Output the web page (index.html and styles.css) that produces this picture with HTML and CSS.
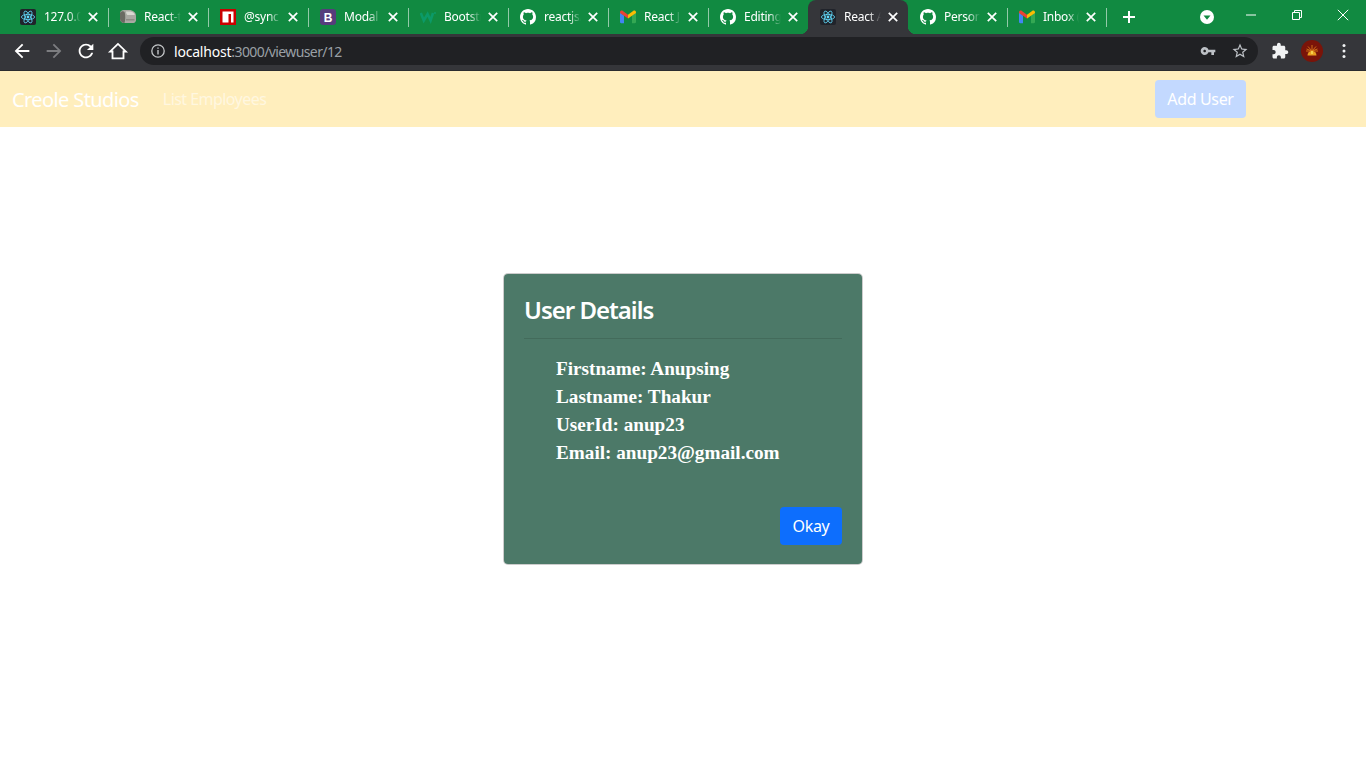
FILE: index.html
```html
<!DOCTYPE html>
<html lang="en">
<head>
<meta charset="utf-8">
<title>React App</title>
<link rel="stylesheet" href="styles.css">
</head>
<body>
<svg class="sprite" aria-hidden="true">
  <symbol id="react" viewBox="0 0 16 16">
    <rect width="16" height="16" rx="2" fill="#20232a"/>
    <g fill="none" stroke="#61dafb" stroke-width=".8">
      <ellipse cx="8" cy="8" rx="6.6" ry="2.6"/>
      <ellipse cx="8" cy="8" rx="6.6" ry="2.6" transform="rotate(60 8 8)"/>
      <ellipse cx="8" cy="8" rx="6.6" ry="2.6" transform="rotate(120 8 8)"/>
    </g>
    <circle cx="8" cy="8" r="1.4" fill="#61dafb"/>
  </symbol>
  <symbol id="github" viewBox="0 0 16 16">
    <path fill="#fff" d="M8 0C3.58 0 0 3.58 0 8c0 3.54 2.29 6.53 5.47 7.59.4.07.55-.17.55-.38 0-.19-.01-.82-.01-1.49-2.01.37-2.53-.49-2.69-.94-.09-.23-.48-.94-.82-1.13-.28-.15-.68-.52-.01-.53.63-.01 1.08.58 1.23.82.72 1.21 1.87.87 2.33.66.07-.52.28-.87.51-1.07-1.78-.2-3.64-.89-3.64-3.95 0-.87.31-1.59.82-2.15-.08-.2-.36-1.02.08-2.12 0 0 .67-.21 2.2.82.64-.18 1.32-.27 2-.27.68 0 1.36.09 2 .27 1.53-1.04 2.2-.82 2.2-.82.44 1.1.16 1.92.08 2.12.51.56.82 1.27.82 2.15 0 3.07-1.87 3.75-3.65 3.95.29.25.54.73.54 1.48 0 1.07-.01 1.93-.01 2.2 0 .21.15.46.55.38A8.013 8.013 0 0016 8c0-4.42-3.58-8-8-8z"/>
  </symbol>
  <symbol id="gmail" viewBox="0 0 16 16">
    <path fill="#4285f4" d="M0 3.600V13c0 .7.5 1.200 1.200 1.200h2.800V6.400z"/>
    <path fill="#34a853" d="M12 6.400v7.800h2.800c.7 0 1.200-.5 1.200-1.200V3.600z"/>
    <path fill="#ea4335" d="M0 3.400C0 1.800 1.700 1.100 2.900 2L8 5.800l1.800 2.300L8 9.500 0 3.900z"/>
    <path fill="#fbbc04" d="M16 3.400c0-1.600-1.700-2.300-2.900-1.400L8 5.800v3.700l8-5.600z"/>
  </symbol>
  <symbol id="close" viewBox="0 0 12 12">
    <path fill="none" stroke="#fff" stroke-width="1.7" d="M1.800 1.800l8.400 8.400M10.200 1.800l-8.400 8.400"/>
  </symbol>
</svg>

<header class="browser">
  <div class="tabstrip">
    <div class="tabs">
      <div class="tab"><svg class="favicon"><use href="#react"/></svg><span class="tab-title">127.0.0</span><svg class="tab-close"><use href="#close"/></svg></div>
      <div class="tab">
        <svg class="favicon" viewBox="0 0 16 16"><path fill="#a9a9a3" d="M0 4.500C0 2.500 1.500 1 4 1h5c4 0 7 2.500 7 6v4c0 1.500-1 3-2.500 3H4C1.500 14 0 12 0 10z"/><path fill="#6a6a63" d="M0 4C1 2 3.500 1.500 4.500 3 5.500 5 5.500 11 4.500 14 2 14 0 12 0 10z"/><path fill="#d8d8d2" d="M6 2.500h4c2.200 0 4.500 1.500 4.800 3.500H7.500C6.500 5.500 6 3.500 6 2.500z"/><path fill="#8b8b84" d="M6 10h8.500v1.500H6z"/></svg>
        <span class="tab-title">React-t</span><svg class="tab-close"><use href="#close"/></svg>
      </div>
      <div class="tab">
        <svg class="favicon" viewBox="0 0 16 16"><rect width="16" height="16" fill="#cb0000"/><path fill="#fff" d="M2.500 2.500h11v11h-2.500V5H8.500v8.500h-6z"/></svg>
        <span class="tab-title">@sync</span><svg class="tab-close"><use href="#close"/></svg>
      </div>
      <div class="tab">
        <svg class="favicon" viewBox="0 0 16 16"><rect width="16" height="16" rx="3" fill="#563d7c"/><text class="favicon-letter" x="8" y="12.500" text-anchor="middle">B</text></svg>
        <span class="tab-title">Modal</span><svg class="tab-close"><use href="#close"/></svg>
      </div>
      <div class="tab">
        <svg class="favicon" viewBox="0 0 16 16"><path fill="none" stroke="#0c9a68" stroke-width="2.600" d="M.8 4l3 7.500L7.600 5l3 6.500L13 4"/><circle cx="15" cy="4" r="1" fill="#0c9a68"/></svg>
        <span class="tab-title">Bootstr</span><svg class="tab-close"><use href="#close"/></svg>
      </div>
      <div class="tab"><svg class="favicon"><use href="#github"/></svg><span class="tab-title">reactjs/</span><svg class="tab-close"><use href="#close"/></svg></div>
      <div class="tab"><svg class="favicon"><use href="#gmail"/></svg><span class="tab-title">React J</span><svg class="tab-close"><use href="#close"/></svg></div>
      <div class="tab tab-before-active"><svg class="favicon"><use href="#github"/></svg><span class="tab-title">Editing</span><svg class="tab-close"><use href="#close"/></svg></div>
      <div class="tab tab-active"><svg class="favicon"><use href="#react"/></svg><span class="tab-title">React A</span><svg class="tab-close"><use href="#close"/></svg></div>
      <div class="tab tab-narrow"><svg class="favicon"><use href="#github"/></svg><span class="tab-title">Person</span><svg class="tab-close"><use href="#close"/></svg></div>
      <div class="tab tab-narrow"><svg class="favicon"><use href="#gmail"/></svg><span class="tab-title">Inbox (</span><svg class="tab-close"><use href="#close"/></svg></div>
    </div>
    <button class="new-tab" aria-label="New tab"><svg class="new-tab-icon" viewBox="0 0 12 12"><path fill="none" stroke="#fff" stroke-width="2" d="M6 0v12M0 6h12"/></svg></button>
    <div class="strip-spacer"></div>
    <div class="tab-search"><svg class="tab-search-icon" viewBox="0 0 14 14"><circle cx="7" cy="7" r="7" fill="#fff"/><path fill="#118a41" d="M3.500 5.500h7L7 9.800z"/></svg></div>
    <div class="window-controls">
      <div class="window-btn"><svg class="window-icon" viewBox="0 0 12 12"><path stroke="#fff" d="M1 6h10"/></svg></div>
      <div class="window-btn"><svg class="window-icon" viewBox="0 0 12 12"><path fill="none" stroke="#fff" d="M1.500 3.500h7v7h-7zM3.500 3.500v-2h7v7h-2"/></svg></div>
      <div class="window-btn"><svg class="window-icon" viewBox="0 0 12 12"><path stroke="#fff" d="M.8.8l10.400 10.400M11.200.8L.8 11.200"/></svg></div>
    </div>
  </div>
  <div class="toolbar">
    <button class="tool" aria-label="Back"><svg class="tool-icon" viewBox="0 0 24 24"><path fill="#fff" d="M20 11H7.830l5.590-5.590L12 4l-8 8 8 8 1.410-1.410L7.830 13H20v-2z"/></svg></button>
    <button class="tool" aria-label="Forward"><svg class="tool-icon" viewBox="0 0 24 24"><path fill="#7c7d80" d="M4 11h12.170l-5.590-5.590L12 4l8 8-8 8-1.410-1.410L16.170 13H4v-2z"/></svg></button>
    <button class="tool" aria-label="Reload"><svg class="tool-icon" viewBox="0 0 24 24"><path fill="#fff" d="M17.650 6.350C16.200 4.900 14.210 4 12 4c-4.420 0-7.990 3.580-7.990 8s3.570 8 7.990 8c3.730 0 6.840-2.550 7.730-6h-2.080c-.82 2.330-3.040 4-5.650 4-3.310 0-6-2.690-6-6s2.690-6 6-6c1.660 0 3.140.69 4.220 1.780L13 11h7V4l-2.350 2.350z"/></svg></button>
    <button class="tool" aria-label="Home"><svg class="tool-icon" viewBox="0 0 24 24"><path fill="none" stroke="#fff" stroke-width="2" d="M12 4.300L3.500 12.500H6V20h12v-7.500h2.500z"/></svg></button>
    <div class="omnibox">
      <svg class="info-icon" viewBox="0 0 14 14"><circle cx="7" cy="7" r="6.200" fill="none" stroke="#c4c7c9" stroke-width="1.300"/><path stroke="#c4c7c9" stroke-width="1.400" d="M7 3.400v1.400M7 6v4.600"/></svg>
      <span class="url"><span class="url-host">localhost</span><span class="url-rest">:3000/viewuser/12</span></span>
      <span class="omni-spacer"></span>
      <svg class="omni-icon" viewBox="0 0 24 24"><path fill="#bdc1c6" d="M12.650 10C11.830 7.670 9.610 6 7 6c-3.310 0-6 2.690-6 6s2.690 6 6 6c2.610 0 4.830-1.670 5.650-4H17v4h4v-4h2v-4H12.650zM7 14c-1.100 0-2-.9-2-2s.9-2 2-2 2 .9 2 2-.9 2-2 2z"/></svg>
      <svg class="omni-icon omni-star" viewBox="0 0 24 24"><path fill="#bdc1c6" d="M22 9.240l-7.190-.62L12 2 9.190 8.630 2 9.240l5.460 4.730L5.820 21 12 17.270 18.180 21l-1.630-7.030L22 9.240zM12 15.400l-3.760 2.270 1-4.280-3.320-2.880 4.380-.38L12 6.100l1.710 4.040 4.380.38-3.320 2.880 1 4.280L12 15.400z"/></svg>
    </div>
    <button class="tool" aria-label="Extensions"><svg class="ext-icon" viewBox="0 0 24 24"><path fill="#f1f3f4" d="M20.500 11H19V7c0-1.100-.9-2-2-2h-4V3.500C13 2.120 11.880 1 10.500 1S8 2.120 8 3.500V5H4c-1.100 0-1.990.9-1.990 2v3.800H3.500c1.490 0 2.700 1.210 2.700 2.700s-1.210 2.700-2.700 2.700H2V20c0 1.100.9 2 2 2h3.800v-1.500c0-1.490 1.210-2.700 2.700-2.700 1.490 0 2.700 1.210 2.700 2.700V22H17c1.100 0 2-.9 2-2v-4h1.500c1.380 0 2.500-1.120 2.500-2.500S21.880 11 20.500 11z"/></svg></button>
    <button class="tool" aria-label="Profile"><svg class="avatar" viewBox="0 0 22 22"><circle cx="11" cy="11" r="11" fill="#7a1409"/><g stroke="#d9791a" stroke-width=".9"><path d="M11 11V5M11 11L7 6.500M11 11l4-4.500M11 11L5.500 9M11 11l5.500-2M11 11H5M11 11h6"/></g><path fill="#e8a020" d="M6.500 15.500a4.500 4.500 0 019 0z"/><rect x="10" y="11" width="2" height="3" fill="#f6d04a"/></svg></button>
    <button class="tool" aria-label="Menu"><svg class="dots-icon" viewBox="0 0 4 16"><circle cx="2" cy="2.500" r="1.500" fill="#f1f3f4"/><circle cx="2" cy="8" r="1.500" fill="#f1f3f4"/><circle cx="2" cy="13.500" r="1.500" fill="#f1f3f4"/></svg></button>
  </div>
</header>

<nav class="navbar">
  <a class="brand">Creole Studios</a>
  <a class="nav-link">List Employees</a>
  <span class="nav-spacer"></span>
  <button class="btn btn-faded">Add User</button>
</nav>

<main class="page">
  <section class="card">
    <h2 class="card-title">User Details</h2>
    <ul class="details">
      <li>Firstname: Anupsing</li>
      <li>Lastname: Thakur</li>
      <li>UserId: anup23</li>
      <li>Email: anup23@gmail.com</li>
    </ul>
    <div class="card-footer"><button class="btn btn-primary">Okay</button></div>
  </section>
</main>
</body>
</html>
```

FILE: styles.css
```css
* { box-sizing: border-box; }
html, body { margin: 0; height: 100%; }
body { background: #fff; font-family: "Noto Sans", "Open Sans", sans-serif; overflow: hidden; }
button { font-family: inherit; border: 0; padding: 0; background: none; }
.sprite { display: none; }

.tabstrip { display: flex; height: 34px; background: #118a41; padding-left: 8px; }
.tabs { display: flex; }
.tab { position: relative; display: flex; align-items: center; width: 100px; height: 34px; padding: 0 9px 0 12px; color: #fff; }
.tab::after { content: ""; position: absolute; right: -1px; top: 8px; width: 1px; height: 19px; background: rgba(255,255,255,.55); }
.tab-before-active::after { display: none; }
.tab-narrow { width: 99px; }
.tab-active { background: #35363a; border-radius: 8px 8px 0 0; width: 100px; }
.tab-active::after { right: -8px; top: auto; bottom: 0; width: 8px; height: 8px; background: radial-gradient(circle at 100% 0, transparent 8px, #35363a 8.5px); }
.tab-active::before { content: ""; position: absolute; left: -8px; bottom: 0; width: 8px; height: 8px; background: radial-gradient(circle at 0 0, transparent 8px, #35363a 8.5px); }
.favicon { width: 16px; height: 16px; flex: none; }
.favicon-letter { font: bold 12px "Liberation Sans", sans-serif; fill: #fff; }
.tab-title { flex: 1; min-width: 0; margin: 0 2px 0 8px; font-size: 12px; line-height: 16px; letter-spacing: -.25px; white-space: nowrap; overflow: hidden; -webkit-mask-image: linear-gradient(to right, #000 60%, transparent 90%); mask-image: linear-gradient(to right, #000 60%, transparent 90%); }
.tab-close { width: 12px; height: 12px; flex: none; }

.new-tab { width: 46px; height: 34px; display: flex; align-items: center; justify-content: center; }
.new-tab-icon { width: 12px; height: 12px; }
.strip-spacer { flex: 1; }
.tab-search { display: flex; align-items: center; margin-right: 14px; }
.tab-search-icon { width: 14px; height: 14px; }
.window-controls { display: flex; }
.window-btn { width: 46px; height: 29px; display: flex; align-items: center; justify-content: center; }
.window-icon { width: 12px; height: 12px; }

.toolbar { display: flex; align-items: center; height: 37px; padding: 0 6px 3px; background: #35363a; border-bottom: 1px solid #2b2c2f; }
.tool { width: 32px; height: 32px; display: flex; align-items: center; justify-content: center; flex: none; }
.tool-icon { width: 22px; height: 22px; }
.ext-icon { width: 18px; height: 18px; }
.avatar { width: 22px; height: 22px; }
.dots-icon { width: 4px; height: 16px; }
.omnibox { flex: 1; display: flex; align-items: center; height: 28px; margin: 0 6px; padding: 0 9px 0 11px; background: #202124; border-radius: 14px; }
.info-icon { width: 14px; height: 14px; flex: none; }
.url { margin-left: 9px; padding-top: 2px; font-size: 14px; letter-spacing: -.2px; white-space: nowrap; }
.url-host { color: #fff; }
.url-rest { color: #9aa0a6; letter-spacing: -.6px; }
.omni-spacer { flex: 1; }
.omni-icon { width: 16px; height: 16px; margin-right: 15px; flex: none; }
.omni-star { width: 18px; height: 18px; margin-right: 0; }

.navbar { display: flex; align-items: center; height: 56px; padding: 0 120px 0 12px; background: #ffeebd; }
.brand { font-size: 20px; color: #fff; letter-spacing: -.6px; }
.nav-link { margin-left: 24px; font-size: 16px; color: rgba(255,255,255,.55); letter-spacing: -.55px; }
.nav-spacer { flex: 1; }
.btn { height: 38px; border-radius: 4px; font-size: 16px; color: #fff; letter-spacing: -.35px; }
.btn-faded { width: 91px; background: #c3d9ff; }
.btn-primary { width: 62px; background: #0d6efd; }

.page { display: flex; justify-content: center; padding-top: 146px; }
.card { width: 360px; height: 292px; padding: 20px; background: #4c7968; background-clip: padding-box; border: 1px solid rgba(0,0,0,.2); border-radius: 5px; color: #fff; }
.card-title { margin: 0; height: 45px; font-size: 24px; line-height: 32px; font-weight: 600; letter-spacing: -1px; border-bottom: 1px solid #436b5b; }
.details { list-style: none; margin: 16px 0 0; padding: 0 0 0 32px; font: bold 19.2px/28px "Liberation Serif", "Times New Roman", serif; }
.card-footer { display: flex; justify-content: flex-end; margin-top: 40px; }
```
